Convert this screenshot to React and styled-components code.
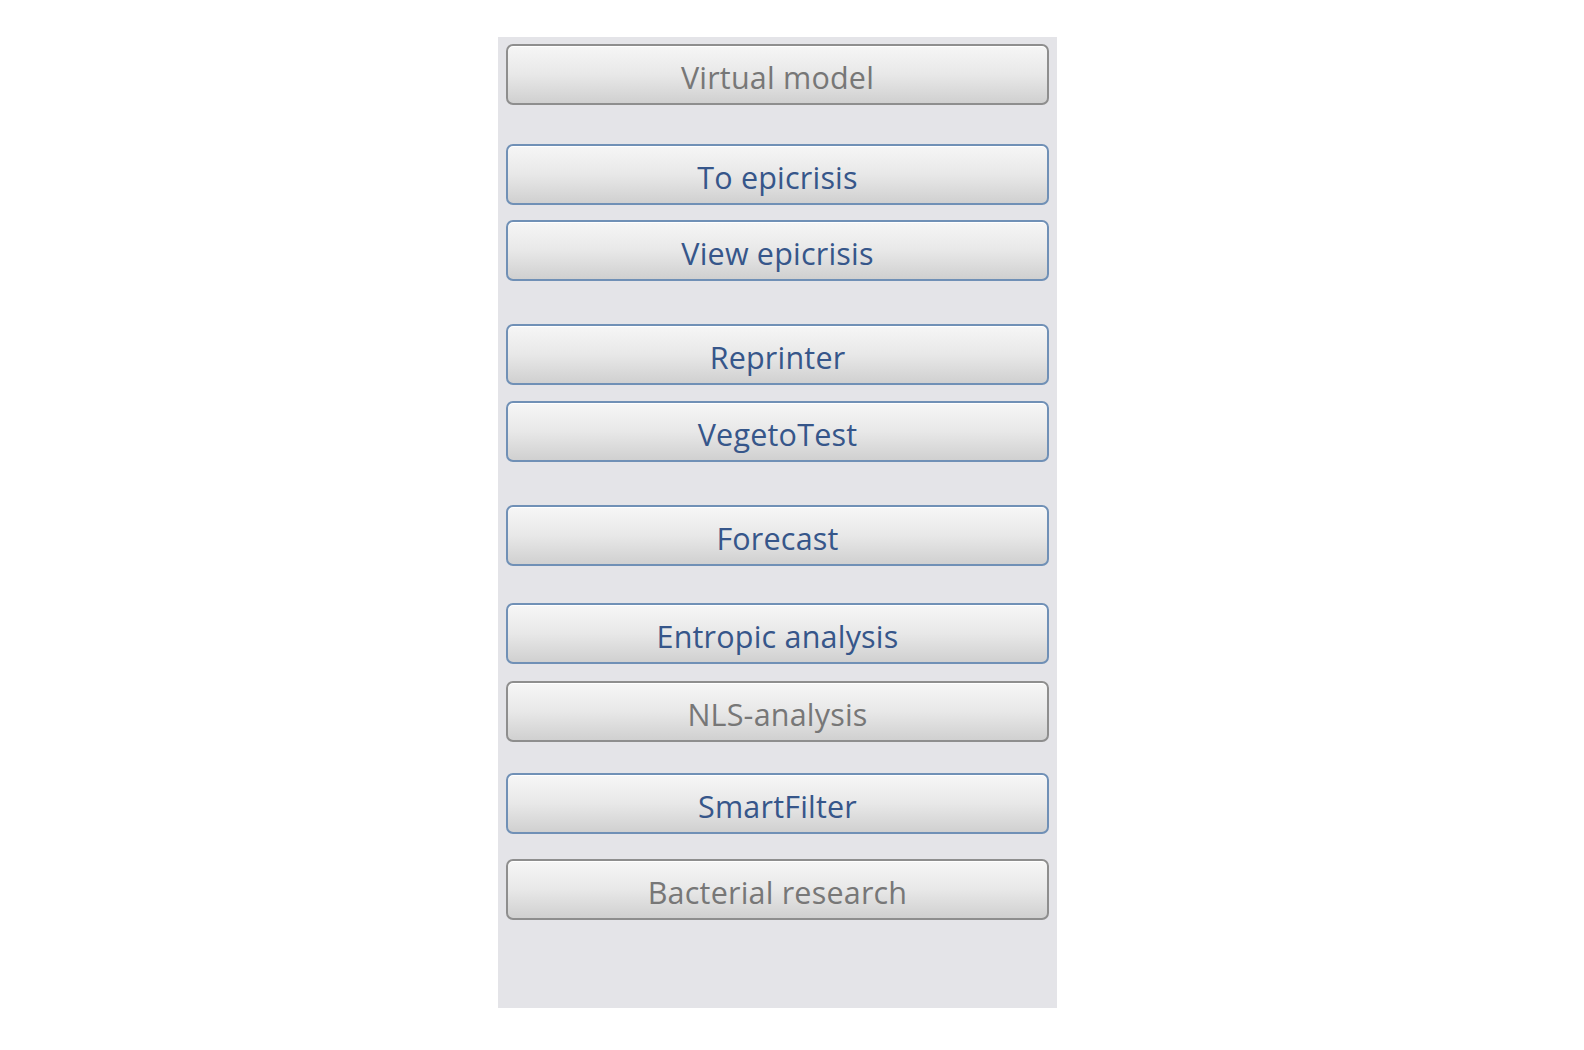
import React from 'react';
import styled, { createGlobalStyle } from 'styled-components';

const GlobalStyle = createGlobalStyle`
  body {
    margin: 0;
    background: #ffffff;
    font-family: "Open Sans", "DejaVu Sans", sans-serif;
  }
`;

const items = [
  { label: 'Virtual model', disabled: true, gap: 0 },
  { label: 'To epicrisis', gap: 39 },
  { label: 'View epicrisis', gap: 15 },
  { label: 'Reprinter', gap: 43 },
  { label: 'VegetoTest', gap: 16 },
  { label: 'Forecast', gap: 43 },
  { label: 'Entropic analysis', gap: 37 },
  { label: 'NLS-analysis', disabled: true, gap: 17 },
  { label: 'SmartFilter', gap: 31 },
  { label: 'Bacterial research', disabled: true, gap: 25 },
];

const App = () => {
  return (
    <>
      <GlobalStyle />
      <Page>
        <Panel>
          {items.map(item => (
            <MenuButton
              key={item.label}
              $disabled={item.disabled}
              $gap={item.gap}
            >
              {item.label}
            </MenuButton>
          ))}
        </Panel>
      </Page>
    </>
  );
};

export default App;

const Page = styled.div`
  width: 1584px;
  height: 1050px;
  padding-top: 37px;
  padding-left: 498px;
  box-sizing: border-box;
`;

const Panel = styled.div`
  width: 559px;
  height: 971px;
  box-sizing: border-box;
  padding: 7px 8px;
  background: #e4e4e8;
  display: flex;
  flex-direction: column;
`;

const MenuButton = styled.div`
  height: 61px;
  margin-top: ${props => props.$gap}px;
  box-sizing: border-box;
  border: 2px solid ${props => (props.$disabled ? '#8e8e8e' : '#7090b6')};
  border-radius: 7px;
  background: linear-gradient(to bottom, #f6f6f6 0%, #e8e8e8 50%, #d0d0d0 100%);
  box-shadow: inset 0 1px 0 #ffffff;
  display: flex;
  align-items: center;
  justify-content: center;
  padding-top: 5px;
  font-size: 30.5px;
  letter-spacing: 0.2px;
  color: ${props => (props.$disabled ? '#777777' : '#36568a')};
  flex-shrink: 0;
`;
